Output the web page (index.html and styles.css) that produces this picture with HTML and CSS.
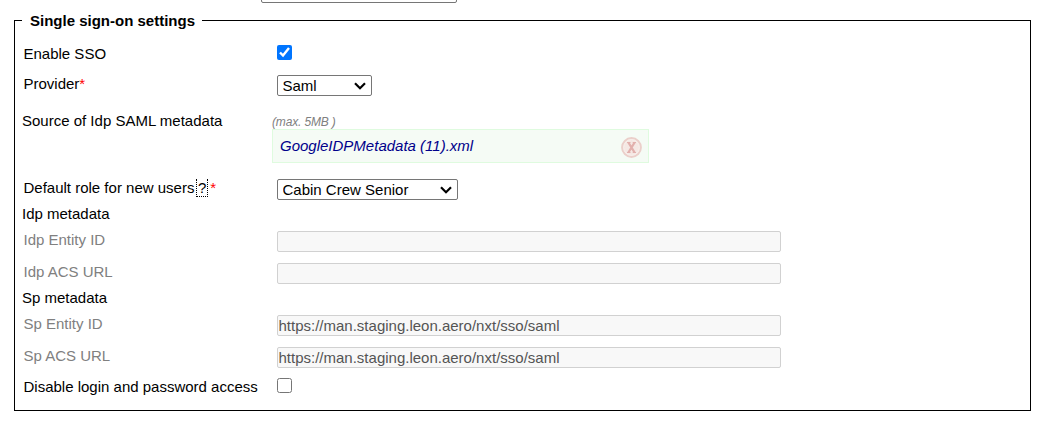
FILE: index.html
```html
<!DOCTYPE html>
<html lang="en">
  <head>
    <meta charset="UTF-8" />
    <meta name="viewport" content="width=device-width, initial-scale=1.0" />
    <title>Single sign-on settings</title>
    <link rel="stylesheet" href="styles.css">
  </head>
  <body>
    <div class="previous-section">
      <input type="text" class="previous-field" />
    </div>

    <fieldset class="settings">
      <legend>Single sign-on settings</legend>

      <div class="row row-check">
        <label for="enableSso">Enable SSO</label>
        <input type="checkbox" id="enableSso" checked />
      </div>

      <div class="row">
        <label for="provider">Provider<span class="required">*</span></label>
        <div class="select-box">
          <select id="provider" class="select-provider">
            <option>Saml</option>
          </select>
          <svg class="arrow" viewBox="0 0 12 8" width="12" height="8">
            <path d="M1 1.2l5 5 5-5" />
          </svg>
        </div>
      </div>

      <div class="row row-file">
        <span>Source of Idp SAML metadata</span>
        <div class="upload">
          <span class="hint">(max. 5MB )</span>
          <div class="file">
            <span class="file-name">GoogleIDPMetadata (11).xml</span>
            <svg class="remove" viewBox="0 0 22 22" width="22" height="22">
              <circle cx="11.5" cy="10.5" r="9.4" fill="#f5e8e4" stroke="#ebcfca" stroke-width="2" />
              <circle cx="11.5" cy="10.5" r="7.8" fill="none" stroke="#f8f0ec" stroke-width="1" />
              <path d="M8.4 5.5l6.2 10M14.6 5.5l-6.2 10" stroke="#e2b0ad" stroke-width="2.3" />
              <path d="M7 5.5h3.5M12.7 5.5h3.3M7 15.5h3.5M12.7 15.5h3.3" stroke="#e2b0ad" stroke-width="1" />
            </svg>
          </div>
        </div>
      </div>

      <div class="row row-role">
        <label for="role">Default role for new users<span class="help">?</span><span class="required">*</span></label>
        <div class="select-box">
          <select id="role" class="select-role">
            <option>Cabin Crew Senior</option>
          </select>
          <svg class="arrow" viewBox="0 0 12 8" width="12" height="8">
            <path d="M1 1.2l5 5 5-5" />
          </svg>
        </div>
      </div>

      <div class="heading">Idp metadata</div>
      <div class="row disabled">
        <label for="idpEntity">Idp Entity ID</label>
        <input type="text" id="idpEntity" class="input-field" disabled />
      </div>
      <div class="row disabled row-last">
        <label for="idpAcs">Idp ACS URL</label>
        <input type="text" id="idpAcs" class="input-field" disabled />
      </div>

      <div class="heading">Sp metadata</div>
      <div class="row disabled">
        <label for="spEntity">Sp Entity ID</label>
        <input type="text" id="spEntity" class="input-field" value="https://man.staging.leon.aero/nxt/sso/saml" disabled />
      </div>
      <div class="row disabled">
        <label for="spAcs">Sp ACS URL</label>
        <input type="text" id="spAcs" class="input-field" value="https://man.staging.leon.aero/nxt/sso/saml" disabled />
      </div>

      <div class="row row-login">
        <label for="disableLogin">Disable login and password access</label>
        <input type="checkbox" id="disableLogin" />
      </div>
    </fieldset>
  </body>
</html>
```

FILE: styles.css
```css
body {
  margin: 0;
  font-family: Arial, "Liberation Sans", sans-serif;
  font-size: 15px;
  line-height: 18px;
  background-color: #ffffff;
  color: #000000;
}

.previous-section {
  display: flex;
  align-items: flex-end;
  height: 3px;
  margin-bottom: 9px;
  padding-left: 261px;
  overflow: hidden;
}

.previous-field {
  flex: none;
  width: 196px;
}

.settings {
  box-sizing: border-box;
  width: 1017px;
  height: 399px;
  margin: 0 0 0 14px;
  padding: 11px 7px 0;
  border: 1px solid #000000;
}

legend {
  padding: 0 7px 0 8px;
  font-weight: bold;
  line-height: 17px;
}

.row {
  display: grid;
  grid-template-columns: 253.5px auto;
  justify-content: start;
  align-items: start;
  box-sizing: border-box;
  height: 32px;
  padding: 5px 0 0 1.5px;
}

.row-check {
  height: 30px;
}

.row-file {
  height: 72px;
  padding: 10px 0 0;
  grid-template-columns: 250px auto;
}

.row-role {
  height: 30px;
}

.row-last {
  height: 30px;
}

.row-login {
  padding-top: 4px;
}

.heading {
  height: 21px;
  padding-top: 1px;
}

.disabled {
  color: #808080;
}

.required {
  color: #ff0000;
}

.help {
  margin: 0 2px 0 1.5px;
  padding: 0 1px;
  border: 1px dotted #000000;
  border-top: none;
}

input,
select {
  box-sizing: border-box;
  height: 21px;
  margin: 0;
  font-family: inherit;
  font-size: 15px;
  border: 1px solid #767676;
  border-radius: 2px;
}

select {
  display: block;
  padding: 0 4.5px;
  appearance: none;
  background-color: #ffffff;
  color: #000000;
}

.select-box {
  position: relative;
}

.arrow {
  position: absolute;
  top: 7px;
  right: 6px;
  fill: none;
  stroke: #000000;
  stroke-width: 2.2;
  pointer-events: none;
}

input[type="checkbox"] {
  width: 15px;
  height: 15px;
}

.select-provider {
  width: 95px;
}

.select-role {
  width: 181px;
}

.input-field {
  width: 504px;
  padding: 0 0.5px;
  background-color: #f8f8f8;
  border-color: #d1d1d1;
  color: #545454;
}

.upload {
  font-style: italic;
}

.hint {
  display: block;
  height: 16px;
  padding-top: 1px;
  font-size: 12px;
  letter-spacing: -0.15px;
  color: #808080;
}

.file {
  display: flex;
  justify-content: space-between;
  box-sizing: border-box;
  width: 377px;
  height: 34px;
  padding: 7px 6px 0 7px;
  background-color: #f5fbf5;
  border: 1px solid #dffbdf;
}

.file-name {
  color: #00008b;
}
```
